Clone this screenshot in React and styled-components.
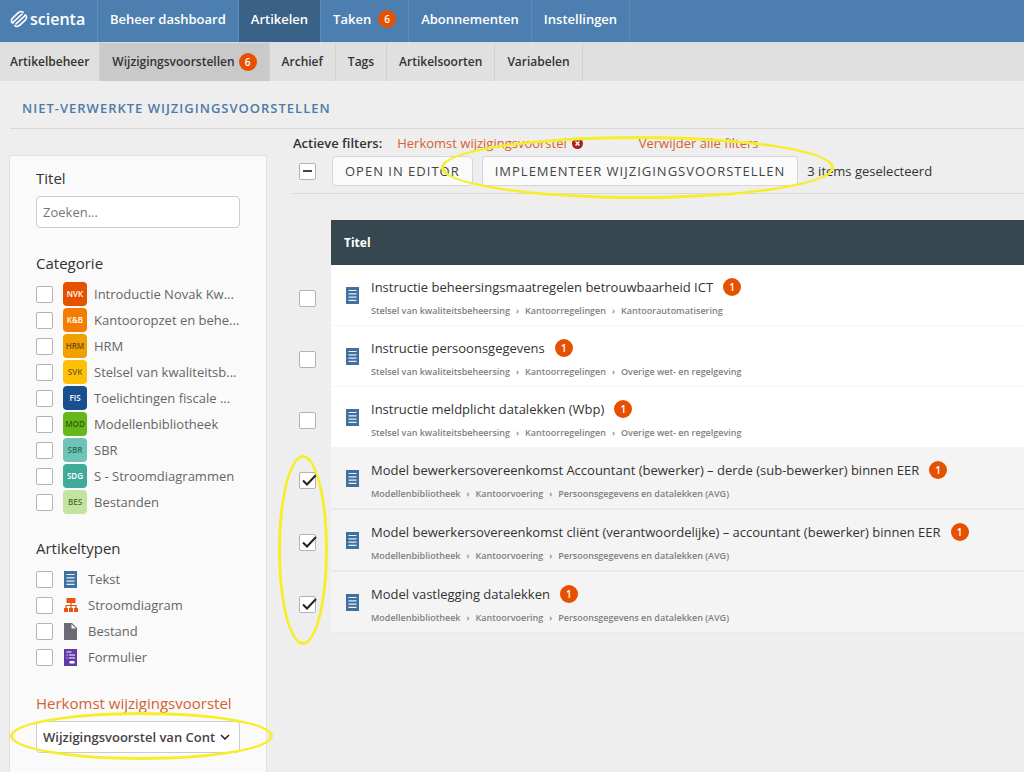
import React from "react";
import styled, { createGlobalStyle, css } from "styled-components";

const categories = [
  { code: "NVK", label: "Introductie Novak Kw...", bg: "#e65100", color: "#fff" },
  { code: "K&B", label: "Kantooropzet en behe...", bg: "#f57c00", color: "#fff" },
  { code: "HRM", label: "HRM", bg: "#f0a000", color: "#6b4a10" },
  { code: "SVK", label: "Stelsel van kwaliteitsb...", bg: "#ffc107", color: "#7a5c10" },
  { code: "FIS", label: "Toelichtingen fiscale ...", bg: "#174f8f", color: "#fff" },
  { code: "MOD", label: "Modellenbibliotheek", bg: "#66b71a", color: "#2f5a10" },
  { code: "SBR", label: "SBR", bg: "#6ec5b5", color: "#2f6b60" },
  { code: "SDG", label: "S - Stroomdiagrammen", bg: "#3fab98", color: "#fff" },
  { code: "BES", label: "Bestanden", bg: "#c3e4a0", color: "#55703c" },
];

const kwaliteit = "Stelsel van kwaliteitsbeheersing";
const modellen = ["Modellenbibliotheek", "Kantoorvoering", "Persoonsgegevens en datalekken (AVG)"];

const articles = [
  {
    title: "Instructie beheersingsmaatregelen betrouwbaarheid ICT",
    path: [kwaliteit, "Kantoorregelingen", "Kantoorautomatisering"],
  },
  {
    title: "Instructie persoonsgegevens",
    path: [kwaliteit, "Kantoorregelingen", "Overige wet- en regelgeving"],
  },
  {
    title: "Instructie meldplicht datalekken (Wbp)",
    path: [kwaliteit, "Kantoorregelingen", "Overige wet- en regelgeving"],
  },
  {
    title: "Model bewerkersovereenkomst Accountant (bewerker) – derde (sub-bewerker) binnen EER",
    path: modellen,
    selected: true,
    marked: true,
  },
  {
    title: "Model bewerkersovereenkomst cliënt (verantwoordelijke) – accountant (bewerker) binnen EER",
    path: modellen,
    selected: true,
  },
  { title: "Model vastlegging datalekken", path: modellen, selected: true },
];

function Logo() {
  return (
    <svg width="18" height="18" viewBox="-9 -9 18 18" fill="none" stroke="#fff" strokeWidth="1.6" strokeLinecap="round" aria-hidden="true">
      <g transform="rotate(-43)">
        <path d="M3.5-5H-4.5a3.6 3.6 0 0 0-3 3.4 1.7 1.7 0 0 0 1.8 0H5.5" />
        <path d="M-3.5 5H4.5a3.6 3.6 0 0 0 3-3.4 1.7 1.7 0 0 0-1.8 0H-5.5" />
        <path d="M3.5-5a3.6 3.6 0 0 1 4 3M-3.5 5a3.6 3.6 0 0 1-4-3" />
      </g>
    </svg>
  );
}

function TextIcon() {
  return (
    <svg width="13" height="17" viewBox="0 0 13 17" aria-hidden="true">
      <path fill="#40709f" d="M0 0h13v17H0z" />
      <path stroke="#e6eef6" strokeWidth="1.2" d="M2.5 3.5h8M2.5 6.8h8M2.5 10.1h8M2.5 13.4h8" />
    </svg>
  );
}

function FlowIcon() {
  return (
    <svg width="14" height="14" viewBox="0 0 14 14" aria-hidden="true">
      <path fill="#e8540c" d="M2.5 0h9v5h-9zM0 10h4v4H0zM5 10h4v4H5zM10 10h4v4h-4z" />
      <path fill="none" stroke="#e8540c" strokeWidth="1.2" d="M7 5v5M2 10V7.5h10V10" />
    </svg>
  );
}

function FileIcon() {
  return (
    <svg width="13" height="17" viewBox="0 0 13 17" aria-hidden="true">
      <path fill="#6b6b75" d="M0 0h8l5 5v12H0z" />
      <path fill="#fafafa" d="M7.5 1v4.5H12z" />
    </svg>
  );
}

function FormIcon() {
  return (
    <svg width="13" height="17" viewBox="0 0 13 17" aria-hidden="true">
      <path fill="#6038a8" d="M0 0h13v17H0z" />
      <path stroke="#fff" strokeWidth="1.2" d="M2.5 3h5M2.5 6h1.2M5 6h6M2.5 9h1.2M5 9h6" />
      <path fill="#fff" d="M5.5 12h5v2.5h-5z" />
    </svg>
  );
}

const types = [
  { label: "Tekst", Icon: TextIcon },
  { label: "Stroomdiagram", Icon: FlowIcon },
  { label: "Bestand", Icon: FileIcon },
  { label: "Formulier", Icon: FormIcon },
];

function Check({ checked, ...rest }) {
  return (
    <CheckWrap>
      <Checkbox type="checkbox" defaultChecked={checked} {...rest} />
      <Tick viewBox="0 0 18 18">
        <path d="M4 8.5 8 12.5 17 3" />
      </Tick>
    </CheckWrap>
  );
}

function App() {
  return (
    <Page>
      <GlobalStyle />
      <TopNav>
        <Brand href="#">
          <Logo />
          scienta
        </Brand>
        <TopLink href="#">Beheer dashboard</TopLink>
        <TopLink href="#" $active>Artikelen</TopLink>
        <TopLink href="#">Taken <Badge>6</Badge></TopLink>
        <TopLink href="#">Abonnementen</TopLink>
        <TopLink href="#">Instellingen</TopLink>
      </TopNav>
      <SubNav>
        <SubLink href="#" $first>Artikelbeheer</SubLink>
        <SubLink href="#" $active>Wijzigingsvoorstellen <Badge>6</Badge></SubLink>
        <SubLink href="#">Archief</SubLink>
        <SubLink href="#">Tags</SubLink>
        <SubLink href="#">Artikelsoorten</SubLink>
        <SubLink href="#">Variabelen</SubLink>
      </SubNav>
      <PageTitle>Niet-verwerkte wijzigingsvoorstellen</PageTitle>
      <Body>
        <Sidebar>
          <FilterTitle as="label" htmlFor="titel">Titel</FilterTitle>
          <Search id="titel" type="text" placeholder="Zoeken..." />

          <FilterTitle>Categorie</FilterTitle>
          <OptionList>
            {categories.map((item) => (
              <Option key={item.code}>
                <Check />
                <Code $bg={item.bg} $color={item.color}>{item.code}</Code>
                <OptionText>{item.label}</OptionText>
              </Option>
            ))}
          </OptionList>

          <FilterTitle>Artikeltypen</FilterTitle>
          <OptionList>
            {types.map(({ label, Icon }) => (
              <Option key={label}>
                <Check />
                <TypeIcon><Icon /></TypeIcon>
                <OptionText>{label}</OptionText>
              </Option>
            ))}
          </OptionList>

          <FilterTitle as="label" htmlFor="herkomst" $accent>Herkomst wijzigingsvoorstel</FilterTitle>
          <SelectWrap>
            <Select id="herkomst">
              <option>Wijzigingsvoorstel van Cont</option>
            </Select>
            <Chevron viewBox="0 0 10 6"><path d="M1 1l4 4 4-4" /></Chevron>
            <Marker $top={-9} $right={-33} $bottom={-7} $left={-26} />
          </SelectWrap>
        </Sidebar>

        <Main>
          <ActiveFilters>
            <FilterLabel>Actieve filters:</FilterLabel>
            <FilterLink href="#">
              Herkomst wijzigingsvoorstel
              <svg width="11" height="11" viewBox="0 0 11 11" aria-hidden="true">
                <circle cx="5.5" cy="5.5" r="5.5" fill="#a8201f" />
                <path d="M3.6 3.6l3.8 3.8M7.4 3.6 3.6 7.4" stroke="#fff" strokeWidth="1.4" />
              </svg>
            </FilterLink>
            <FilterLink href="#">Verwijder alle filters</FilterLink>
          </ActiveFilters>
          <Toolbar>
            <SelectAll type="button" aria-label="Selectie wissen" />
            <Button type="button">Open in editor</Button>
            <Marked>
              <Button type="button">Implementeer wijzigingsvoorstellen</Button>
              <Marker $top={-20} $right={-36} $bottom={-13} $left={-41} />
            </Marked>
            <span>3 items geselecteerd</span>
          </Toolbar>
          <Table>
            <thead>
              <tr>
                <PickCell as="td" />
                <HeadCell colSpan={2}>Titel</HeadCell>
              </tr>
            </thead>
            <tbody>
              {articles.map((item) => (
                <Row key={item.title} $selected={item.selected}>
                  <PickCell>
                    <Check checked={item.selected} aria-label={item.title} />
                    {item.marked && <ColumnMarker />}
                  </PickCell>
                  <IconCell><TextIcon /></IconCell>
                  <TitleCell>
                    <ArticleTitle>
                      <a href="#">{item.title}</a>
                      <Badge>1</Badge>
                    </ArticleTitle>
                    <Crumbs>
                      {item.path.map((part) => <li key={part}>{part}</li>)}
                    </Crumbs>
                  </TitleCell>
                </Row>
              ))}
            </tbody>
          </Table>
        </Main>
      </Body>
    </Page>
  );
}

const GlobalStyle = createGlobalStyle`
  * {
    box-sizing: border-box;
  }

  body {
    margin: 0;
    background: #eee;
    color: #333;
    font-family: "Open Sans", sans-serif;
    font-size: 13px;
    line-height: 20px;
  }

  a {
    color: inherit;
    text-decoration: none;
  }

  svg {
    flex: none;
  }
`;

const Page = styled.div`
  display: flex;
  flex-direction: column;
  min-height: 100vh;
  overflow-x: hidden;
`;

const TopNav = styled.nav`
  display: flex;
  height: 43px;
  background: #4c7fb0;
  border-bottom: 1px solid #d5dde5;
  color: #fff;
  font-weight: 600;
`;

const Brand = styled.a`
  display: flex;
  align-items: center;
  gap: 2px;
  width: 98px;
  padding: 0 0 4px 10px;
  border-right: 1px solid #5e8dba;
  font-size: 16px;
`;

const TopLink = styled.a`
  display: flex;
  align-items: center;
  gap: 7px;
  padding: 0 12px 4px;
  border-right: 1px solid #5e8dba;
  background: ${(p) => (p.$active ? "#3a6186" : "transparent")};
  white-space: nowrap;
`;

const SubNav = styled.nav`
  display: flex;
  height: 38px;
  background: #e0e0e0;
  font-size: 12px;
  font-weight: 600;
`;

const SubLink = styled.a`
  display: flex;
  align-items: center;
  gap: 4px;
  padding: 0 ${(p) => (p.$first ? "10px" : "12px")};
  border-right: 1px solid #d0d0d0;
  background: ${(p) => (p.$active ? "#c9c9c9" : "transparent")};
  white-space: nowrap;
`;

const Badge = styled.span`
  flex: none;
  width: 18px;
  height: 18px;
  border-radius: 50%;
  background: #e65100;
  color: #fff;
  font-size: 10px;
  font-weight: 600;
  line-height: 18px;
  text-align: center;
`;

const PageTitle = styled.h1`
  margin: 0 0 0 10px;
  padding: 17px 12px 10px;
  border-bottom: 1px solid #d9d9d9;
  color: #4c7ba8;
  font-size: 13px;
  font-weight: 600;
  letter-spacing: 1px;
  line-height: 20px;
  text-transform: uppercase;
`;

const Body = styled.div`
  display: flex;
  flex: 1;
  gap: 25px;
  padding-left: 9px;
`;

const Sidebar = styled.aside`
  flex: none;
  width: 258px;
  margin-top: 26px;
  padding: 11px 26px 18px;
  border: 1px solid #e0e0e0;
  border-bottom: 0;
  background: #fafafa;
`;

const FilterTitle = styled.h2`
  display: block;
  margin: 0 0 7px;
  color: ${(p) => (p.$accent ? "#d4622f" : "#333")};
  font-size: 15px;
  font-weight: 400;
  line-height: 22px;
  white-space: nowrap;
`;

const field = css`
  display: block;
  width: 100%;
  height: 32px;
  padding: 0 6px;
  border: 1px solid #ccc;
  border-radius: 4px;
  background: #fff;
  color: #444;
  font: inherit;
`;

const Search = styled.input`
  ${field}
  margin-bottom: 24px;

  &::placeholder {
    color: #777;
  }
`;

const OptionList = styled.div`
  display: flex;
  flex-direction: column;
  margin-bottom: 22px;
`;

const Option = styled.label`
  display: flex;
  align-items: center;
  height: 26px;
`;

const OptionText = styled.span`
  color: #666;
  white-space: nowrap;
`;

const Code = styled.span`
  flex: none;
  width: 24px;
  height: 24px;
  margin: 0 7px 0 10px;
  border-radius: 4px;
  background: ${(p) => p.$bg};
  color: ${(p) => p.$color};
  font-size: 8px;
  font-weight: 600;
  line-height: 24px;
  text-align: center;
`;

const TypeIcon = styled.span`
  display: flex;
  flex: none;
  width: 14px;
  margin: 0 10px 0 11px;
`;

const CheckWrap = styled.span`
  display: inline-grid;
  flex: none;
  vertical-align: middle;

  > * {
    grid-area: 1 / 1;
  }
`;

const Checkbox = styled.input`
  appearance: none;
  width: 17px;
  height: 17px;
  margin: 0;
  border: 1px solid #b3b3b3;
  border-radius: 2px;
  background: #fff;
`;

const Tick = styled.svg`
  display: none;
  width: 18px;
  height: 18px;
  fill: none;
  stroke: #222;
  stroke-width: 2;
  pointer-events: none;

  ${Checkbox}:checked + & {
    display: block;
  }
`;

const SelectWrap = styled.div`
  position: relative;
`;

const Select = styled.select`
  ${field}
  appearance: none;
  padding-right: 20px;
  font-weight: 600;
`;

const Chevron = styled.svg`
  position: absolute;
  top: 13px;
  right: 10px;
  width: 10px;
  height: 6px;
  fill: none;
  stroke: #222;
  stroke-width: 1.5;
  pointer-events: none;
`;

const Marker = styled.div`
  position: absolute;
  z-index: 1;
  top: ${(p) => p.$top}px;
  right: ${(p) => p.$right}px;
  bottom: ${(p) => p.$bottom}px;
  left: ${(p) => p.$left}px;
  border: 3px solid #f7ee2a;
  border-radius: 50%;
  pointer-events: none;
`;

const Main = styled.main`
  flex: 1;
  min-width: 0;
`;

const ActiveFilters = styled.div`
  display: flex;
  gap: 15px;
  padding: 4px 0 0 1px;
  white-space: nowrap;
`;

const FilterLabel = styled.span`
  font-weight: 600;
`;

const FilterLink = styled.a`
  display: flex;
  align-items: center;
  gap: 5px;
  color: #d4622f;

  & + & {
    margin-left: 41px;
  }
`;

const Toolbar = styled.div`
  display: flex;
  align-items: center;
  gap: 9px;
  padding: 3px 0 7px 7px;
  border-bottom: 1px solid #d9d9d9;
  white-space: nowrap;
`;

const SelectAll = styled.button`
  display: flex;
  align-items: center;
  justify-content: center;
  width: 17px;
  height: 17px;
  margin-right: 7px;
  padding: 0;
  border: 1px solid #b3b3b3;
  border-radius: 2px;
  background: #fff;

  &::before {
    content: "";
    width: 9px;
    height: 2px;
    background: #444;
  }
`;

const Button = styled.button`
  height: 30px;
  padding: 0 12px;
  border: 1px solid #d6d6d6;
  border-radius: 4px;
  background: #fafafa;
  color: #444;
  font: inherit;
  letter-spacing: 1px;
  text-transform: uppercase;
`;

const Marked = styled.div`
  position: relative;
`;

const Table = styled.table`
  width: 100%;
  margin-top: 26px;
  border-spacing: 0;
`;

const HeadCell = styled.th`
  height: 45px;
  padding: 0 13px;
  background: #37474f;
  color: #fff;
  font-size: 12px;
  font-weight: 700;
  text-align: left;
`;

const PickCell = styled.td`
  position: relative;
  width: 39px;
  padding: 2px 0 0 7px;
`;

const ColumnMarker = styled(Marker).attrs({ $top: 7, $left: -14, $right: 3, $bottom: -135 })``;

const IconCell = styled.td`
  width: 40px;
  padding: 0 0 0 15px;

  svg {
    display: block;
  }
`;

const TitleCell = styled.td`
  padding: 12px 0 5px;
  white-space: nowrap;
`;

const Row = styled.tr`
  ${IconCell}, ${TitleCell} {
    background: ${(p) => (p.$selected ? "#f4f4f4" : "#fff")};
    border-bottom: ${(p) => (p.$selected ? "2px solid #ebebeb" : "1px solid #f4f4f4")};
  }
`;

const ArticleTitle = styled.div`
  display: flex;
  align-items: center;
  gap: 10px;
`;

const Crumbs = styled.ol`
  display: flex;
  margin: 5px 0 0;
  padding: 0;
  color: #808080;
  font-size: 9px;
  font-weight: 600;
  line-height: 18px;
  list-style: none;

  li + li::before {
    content: "›";
    margin: 0 6px;
  }
`;

export default App;
